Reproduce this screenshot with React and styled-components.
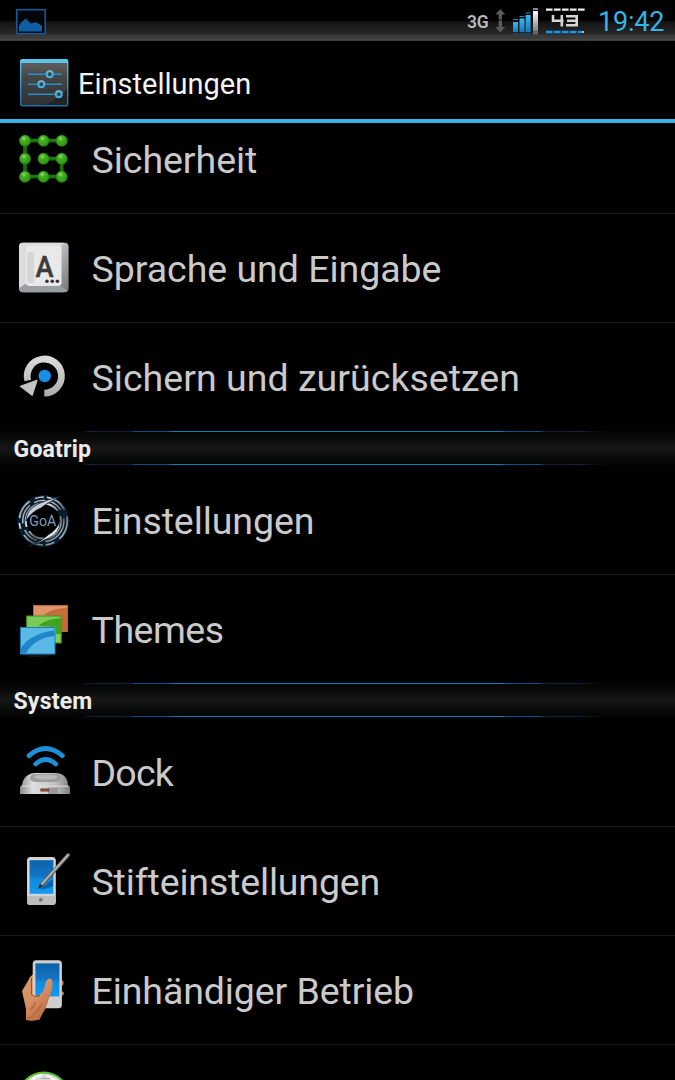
import React from 'react';
import styled, {createGlobalStyle} from 'styled-components';

const GlobalStyle = createGlobalStyle`
    body {
        margin: 0;
        background: #000;
        font-family: Roboto, 'Open Sans', sans-serif;
        overflow: hidden;
    }
`

const Screen = styled.div`
    width: 675px;
    height: 1080px;
    display: flex;
    flex-direction: column;
    overflow: hidden;
    background: #000;
`

const StatusBar = styled.div`
    box-sizing: border-box;
    flex: none;
    display: flex;
    align-items: center;
    height: 41px;
    padding: 1px 10px 0 15px;
    background: linear-gradient(#000 0 20px, #131313 22px, #1d1d1d 28px, #282828 34px, #383838 35px, #3e3e3e 39px, #555 40px, #222 41px);
`

const StatusIcon = styled.svg`
    flex: none;
    display: block;
    margin-left: ${({$gap}) => $gap || 0}px;
`

const Network = styled.span`
    margin-left: auto;
    width: 22px;
    padding-top: 2px;
    font-size: 17.5px;
    font-weight: 600;
    line-height: 39px;
    letter-spacing: -0.2px;
    color: #b9b9b9;
`

const Clock = styled.span`
    margin-left: 13px;
    width: 67px;
    padding-top: 2px;
    font-size: 27px;
    line-height: 39px;
    letter-spacing: -0.2px;
    color: #33b5e5;
    white-space: nowrap;
`

const ActionBar = styled.header`
    box-sizing: border-box;
    flex: none;
    display: flex;
    align-items: center;
    height: 82px;
    padding: 6px 0 0 20px;
    border-bottom: 4px solid #33b5e5;
`

const Title = styled.h1`
    margin: 1px 0 0 9px;
    font-size: 29px;
    font-weight: 400;
    line-height: 40px;
    letter-spacing: 0;
    color: #f3f3f3;
`

const List = styled.main`
    flex: 1;
    min-height: 0;
    overflow: hidden;
`

/* the list is scrolled a little, the first row is cut by the action bar */
const Scrolled = styled.div`
    margin-top: -18px;
`

const Row = styled.div`
    box-sizing: border-box;
    display: flex;
    align-items: center;
    height: ${({$last}) => $last ? 108 : 109}px;
    padding: 0 14px;
    border-bottom: ${({$last}) => $last ? 'none' : '1px solid #1b1b1b'};
`

const Icon = styled.svg`
    flex: none;
    display: block;
    width: 60px;
    height: 60px;
    overflow: visible;
`

const Label = styled.span`
    margin: 1px 0 0 17.5px;
    font-size: 37.5px;
    line-height: 48px;
    letter-spacing: ${({$spacing}) => $spacing}px;
    color: #cacaca;
    white-space: nowrap;
`

const Section = styled.h2`
    box-sizing: border-box;
    display: flex;
    flex-direction: column;
    margin: 0 0 1px;
    height: 34px;
    font-size: 23px;
    font-weight: 700;
    line-height: 32px;
    letter-spacing: 0.2px;
    color: #ececec;
    background: linear-gradient(#030505, #080a0a 20%, #171717 50%, #080a0a 80%, #030505);

    &::before,
    &::after {
        content: '';
        flex: none;
        height: 1px;
        background: linear-gradient(90deg, transparent 82px, #06243c 90px 132px, #07508a 134px 168px, #0a7cc2 172px 500px, #07508a 508px 540px, #06243c 543px 585px, #111 590px, transparent 605px);
    }
`

const SectionName = styled.span`
    flex: none;
    height: 30px;
    padding: 2px 13.5px 0;
`

const Defs = () => (
    <svg width="0" height="0" style={{position: 'absolute'}}>
        <defs>
            <radialGradient id="green" cx=".4" cy=".3" r=".7">
                <stop offset="0" stopColor="#93dc6c"/>
                <stop offset=".35" stopColor="#41b01e"/>
                <stop offset="1" stopColor="#2f9412"/>
            </radialGradient>
            <linearGradient id="key" x2="1" y2="1">
                <stop offset="0" stopColor="#f2f2f2"/>
                <stop offset=".5" stopColor="#b5b7b9"/>
                <stop offset="1" stopColor="#74797d"/>
            </linearGradient>
            <linearGradient id="silver" x2="0" y2="1">
                <stop offset="0" stopColor="#d9d9d9"/>
                <stop offset="1" stopColor="#b0b0b0"/>
            </linearGradient>
            <linearGradient id="dock" x2="1" y2="0">
                <stop offset="0" stopColor="#8d8d8d"/>
                <stop offset=".25" stopColor="#dedede"/>
                <stop offset=".7" stopColor="#c2c2c2"/>
                <stop offset="1" stopColor="#7e7e7e"/>
            </linearGradient>
            <linearGradient id="blue" x2="0" y2="1">
                <stop offset="0" stopColor="#0b62a8"/>
                <stop offset=".5" stopColor="#1277c4"/>
                <stop offset=".55" stopColor="#0d8be0"/>
                <stop offset="1" stopColor="#139af0"/>
            </linearGradient>
            <linearGradient id="panel" x2="0" y2="1">
                <stop offset="0" stopColor="#636363"/>
                <stop offset=".4" stopColor="#454545"/>
                <stop offset="1" stopColor="#303030"/>
            </linearGradient>
            <linearGradient id="frame" x2="0" y2="1">
                <stop offset="0" stopColor="#57c4ee"/>
                <stop offset="1" stopColor="#1c6fa6"/>
            </linearGradient>
            <linearGradient id="skin" x2=".6" y2="1">
                <stop offset="0" stopColor="#e09a6e"/>
                <stop offset=".5" stopColor="#d58f62"/>
                <stop offset="1" stopColor="#b9683c"/>
            </linearGradient>
            <linearGradient id="chrome" x2="1" y2="1">
                <stop offset="0" stopColor="#7a8289"/>
                <stop offset=".35" stopColor="#dfe3e6"/>
                <stop offset=".6" stopColor="#59626a"/>
                <stop offset="1" stopColor="#c4c9cd"/>
            </linearGradient>
            <linearGradient id="bars" x2="0" y2="1">
                <stop offset="0" stopColor="#36b8f0"/>
                <stop offset="1" stopColor="#1b76bb"/>
            </linearGradient>
            <linearGradient id="bar4" x2="0" y2="1">
                <stop offset="0" stopColor="#fff"/>
                <stop offset="1" stopColor="#7c7c7c"/>
            </linearGradient>
        </defs>
    </svg>
)

const dots = [[11, 12.7], [29.5, 12.7], [47.7, 12.7], [11, 30.7], [29.5, 30.7], [47.7, 30.7], [11, 48.7], [29.5, 48.7], [47.7, 48.7]];

const Pattern = () => (
    <Icon viewBox="0 1 60 60">
        <path d="M47.7 12.7H11V48.7H47.7V30.7H29.5" fill="none" stroke="#176b0a" strokeWidth="3.8"/>
        <path d="M47.7 12H11M29.5 30H47.7M11 48H47.7" fill="none" stroke="#278a16" strokeWidth="1.2"/>
        {dots.map(([x, y]) => <circle key={`${x}-${y}`} cx={x} cy={y} r="5.6" fill="url(#green)" stroke="#1f7a0d" strokeWidth=".6"/>)}
    </Icon>
)

const Key = () => (
    <Icon viewBox="0 1 60 60">
        <rect x="5" y="5.7" width="49.6" height="49.6" rx="4" fill="url(#key)"/>
        <path d="M5.3 50L12 46L47 49L53.6 54Q51 55.3 49 55.3H9Q5.3 55 5.3 50z" fill="#9b9ea0"/>
        <path d="M5 10Q5 5.7 9 5.7H50L47 9L13 46L5 51z" fill="#dcdcdc"/>
        <rect x="12" y="8.5" width="35.5" height="40.5" rx="3.5" fill="#e9e9e9"/>
        <path d="M13 17Q13 15 15 15H20V46H16Q13 46 13 43z" fill="#d6d6d6"/>
        <text x="21.4" y="40" fontFamily="Roboto" fontWeight="500" fontSize="29" textLength="18" lengthAdjust="spacingAndGlyphs" fill="#3c3c3c" stroke="#3c3c3c" strokeWidth=".5">A</text>
        <circle cx="33" cy="44.2" r="1.8" fill="#333"/>
        <circle cx="38.3" cy="44.2" r="1.8" fill="#333"/>
        <circle cx="43.4" cy="44.2" r="1.8" fill="#333"/>
    </Icon>
)

const Restore = () => (
    <Icon viewBox="0 1 60 60">
        <path d="M30.3 47.2A17.1 17.1 0 1 0 13.8 34.5" fill="none" stroke="url(#silver)" strokeWidth="6.8"/>
        <path d="M6.5 40.2L23 34.2L18.2 49.3z" fill="#c4c4c4" stroke="#c4c4c4" strokeWidth="1.2" strokeLinejoin="round"/>
        <circle cx="30.7" cy="30" r="6.2" fill="#1590e6"/>
    </Icon>
)

const Goa = () => (
    <Icon viewBox="0 0 60 60">
        <g fill="none">
            <circle cx="29.3" cy="31" r="21.5" stroke="#081c2e" strokeWidth="9"/>
            <circle cx="29.3" cy="31" r="24" stroke="url(#chrome)" strokeWidth="1.7" strokeDasharray="20 6 9 3 22 7 6 5"/>
            <circle cx="29.3" cy="31" r="20.6" stroke="url(#chrome)" strokeWidth="1.4" strokeDasharray="30 9 16 7 20 5"/>
            <circle cx="29.3" cy="31" r="17.6" stroke="url(#chrome)" strokeWidth="2" strokeDasharray="44 5 50 6"/>
        </g>
        <path d="M46.5 6.5Q33 13 27 18Q17 22 12 31Q12 20 24 14Q34 9 46.5 6.5z" fill="#c8cdd2" stroke="#0c1a26" strokeWidth=".8"/>
        <path d="M14 56.5Q28 51 34 45Q43 40 46 31Q46.5 43 34 48.5Q25 53 14 56.5z" fill="#e6e8ea" stroke="#0c1a26" strokeWidth=".8"/>
        <text x="15.3" y="36" fontFamily="Roboto" fontSize="14" textLength="27" lengthAdjust="spacingAndGlyphs" fill="#7f9cb6">GoA</text>
    </Icon>
)

const Themes = () => (
    <Icon viewBox="0 0 60 60">
        <ellipse cx="23" cy="56" rx="15" ry="2" fill="#131313"/>
        <rect x="19.5" y="6.5" width="34" height="26" fill="#e09468" stroke="#b5653a"/>
        <path d="M30 16Q38 9 53 9V32H47V18z" fill="#c56c3a"/>
        <rect x="12.7" y="17" width="34.5" height="27" fill="#7acb58" stroke="#3c9420"/>
        <path d="M24 27Q32 20 47 19V35H42V28z" fill="#3fa31f"/>
        <rect x="6.5" y="28.5" width="34.5" height="26.5" fill="#5bb9e6" stroke="#1c7cba"/>
        <path d="M7 54.5V49Q17 34 40.5 31.5V37Q20 39 12 54.5z" fill="#1f86ca"/>
    </Icon>
)

const Dock = () => (
    <Icon viewBox="0 0 60 60">
        <path d="M15 13.6Q31.7 -.6 48.3 13.6M21.7 22Q31.7 13 41.7 22" fill="none" stroke="#1f8fd6" strokeWidth="4.8" strokeLinecap="round"/>
        <path d="M6 52V46Q6 44 8 43Q9 36 14 33Q17 31 21 31H41Q46 31 49 33Q53.5 36 54 43Q56 44 56 46V52z" fill="url(#dock)"/>
        <path d="M16 36.5Q16 32 21 32H41Q47 32 47 36.5Q46 40 40 40H23Q17 40 16 36.5z" fill="#9c9c9c"/>
        <path d="M23 33H40Q44 33.5 43 36L36 37.5H26L21 36Q20 33.5 23 33z" fill="#b9b9b9"/>
        <path d="M8 44.2H54" stroke="#e0e0e0" strokeWidth="1"/>
        <rect x="34" y="45.5" width="10" height="6.5" fill="#9b9b9b"/>
        <rect x="26.3" y="46.6" width="8.8" height="3.2" rx="1" fill="#5c4c46"/>
        <path d="M27 49.2H34" stroke="#ed6b2d" strokeWidth="1.2"/>
    </Icon>
)

const Pen = () => (
    <Icon viewBox="0 0 60 60">
        <rect x="13" y="6" width="28.8" height="48" rx="3.5" fill="#d3d3d3"/>
        <path d="M13 45H41.8V50.5Q41.8 54 38.3 54H16.5Q13 54 13 50.5z" fill="#bdbdbd"/>
        <rect x="15.6" y="9.2" width="23.8" height="33.6" fill="url(#blue)"/>
        <path d="M26 38L39 28V35Q32 39 26 38z" fill="#0a63aa"/>
        <circle cx="26.8" cy="48.8" r="2" fill="#777"/>
        <path d="M27 34.5L54.3 4" stroke="#555" strokeWidth="4" strokeLinecap="round"/>
        <path d="M27 34L54 4" stroke="#b3afab" strokeWidth="2.2" strokeLinecap="round"/>
        <path d="M23.6 38L26.2 32.8L29.2 35.2z" fill="#303030"/>
    </Icon>
)

const Hand = () => (
    <Icon viewBox="0 0 60 60">
        <path d="M46 20.5H49Q50.5 23 49 25.5H46zM46 31.5H49Q51 33 49 35.6H46z" fill="#c37547"/>
        <path d="M19 14.5Q16 16 14.5 20L8 31L12 49V60Q19 61 25.5 59.5L28 54L34 44L31 30H20z" fill="url(#skin)"/>
        <rect x="18.7" y=".3" width="29.2" height="48" rx="3.5" fill="#cfcfcf"/>
        <rect x="21.4" y="3.4" width="24" height="33" fill="url(#blue)"/>
        <path d="M18 30Q16 35 13 42L12 49V60Q19 61 25.5 59.5Q28 54 31 49Q33 46 34.5 40Q39 29 38.5 21.5Q37 16.5 33.5 19.5Q31 22 30.5 28Q28 34 24.5 35.5Q21 36.5 19 35z" fill="url(#skin)"/>
        <path d="M17.5 18V34.5Q21 38 26 35.6" fill="none" stroke="#8c4c2a" strokeWidth=".9"/>
        <path d="M16 50Q20 47 21 42M19 55Q25 50 28 43M13 58L19 57" fill="none" stroke="#b06a42" strokeWidth="1.3"/>
    </Icon>
)

const Round = () => (
    <Icon viewBox="0 0 60 60">
        <circle cx="29.7" cy="28.2" r="24.8" fill="#d9dcd6" stroke="#58b92d" strokeWidth="2"/>
        <path d="M17 12Q21 7 28 6M33 6.5L42 12" fill="none" stroke="#f5f5f5" strokeWidth="2.5"/>
        <path d="M27 9.5H36" stroke="#a9aca6" strokeWidth="1"/>
    </Icon>
)

const sliders = [[29.7, 15.2], [21.3, 25.3], [38.8, 35.2]];

const SettingsIcon = () => (
    <svg width="49" height="48" viewBox="0 0 49 48">
        <rect x=".7" y=".7" width="47" height="46" rx="1.5" fill="url(#panel)" stroke="url(#frame)" strokeWidth="1.4"/>
        <path d="M47 30V46H24Q36 42 47 30z" fill="#242424"/>
        <rect x=".5" y=".5" width="47.6" height="3.6" rx="1.2" fill="#5cc5ea"/>
        {sliders.map(([x, y]) => (
            <g key={y} fill="none">
                <path d={`M8 ${y}H42`} stroke="#2190cf" strokeWidth="1.4"/>
                <circle cx={x} cy={y} r="3" fill="#444" stroke="#3fb3e8" strokeWidth="2"/>
                <path d={`M${x - 3.2} ${y - 1.5}A3.6 3.6 0 0 1 ${x + 3.2} ${y - 1.5}`} stroke="#a5b8c0" strokeWidth="1"/>
            </g>
        ))}
    </svg>
)

const bars = [[0, 14, 11], [6.5, 10.5, 8], [12.6, 7, 4.5]];

const Status = () => (
    <StatusBar>
        <StatusIcon width="31" height="27" viewBox="0 0 31 27">
            <rect x="1.7" y="1.7" width="28.6" height="24" fill="#020508" stroke="#0d5c9e" strokeWidth="1.6"/>
            <path d="M4 23.5V18L6 14.5L10.5 10.5L16 15.5L21 14L27 18V23.5z" fill="#0d5fa4"/>
        </StatusIcon>
        <Network>3G</Network>
        <StatusIcon $gap={6} width="11" height="24" viewBox="0 0 11 24">
            <path d="M5.3 0L10.3 5.5H7V10.4H3.6V5.5H.3zM5.3 23.5L.3 18H3.6V11.6H7V18H10.3z" fill="#5b5b5b"/>
        </StatusIcon>
        <StatusIcon $gap={7} width="26" height="27" viewBox="0 0 26 27">
            {bars.map(([x, y, cap]) => (
                <g key={x} fill="url(#bars)">
                    <rect x={x} y={y} width="5" height={24 - y}/>
                    <path d={`M${x} ${cap}h5v1h-5z`} fill="#218cc8"/>
                    <path d={`M${x} 25.3h5v1.4h-5z`} fill="#174f7e"/>
                </g>
            ))}
            <rect x="20" y="3" width="5" height="20.5" fill="url(#bar4)"/>
            <path d="M20 .3h5v1.4h-5z" fill="#c8c8c8"/>
            <path d="M20 23.5h5v3h-5z" fill="#666"/>
        </StatusIcon>
        <StatusIcon $gap={7} width="39" height="26" viewBox="0 0 39 26">
            <path d="M0 1.6H39" stroke="#eee" strokeWidth="2.4" strokeDasharray="6.6 1.4"/>
            <path d="M7 7V12.7H17.5M15.8 7V18.5M20 8.2H30.7V17.3H20M21 12.7H30" fill="none" stroke="#d6d6d6" strokeWidth="2.6"/>
            <path d="M0 24H35" stroke="#1a94e6" strokeWidth="2.4" strokeDasharray="6.6 1.4"/>
            <path d="M35.5 24H38" stroke="#bbb" strokeWidth="2"/>
        </StatusIcon>
        <Clock>19:42</Clock>
    </StatusBar>
)

const groups = [
    {
        items: [
            {label: 'Sicherheit', spacing: -0.04, Art: Pattern},
            {label: 'Sprache und Eingabe', spacing: -0.03, Art: Key},
            {label: 'Sichern und zurücksetzen', spacing: 0.03, Art: Restore},
        ],
    },
    {
        name: 'Goatrip',
        items: [
            {label: 'Einstellungen', spacing: -0.08, Art: Goa},
            {label: 'Themes', spacing: -0.5, Art: Themes},
        ],
    },
    {
        name: 'System',
        items: [
            {label: 'Dock', spacing: -0.8, Art: Dock},
            {label: 'Stifteinstellungen', spacing: -0.16, Art: Pen},
            {label: 'Einhändiger Betrieb', spacing: -0.1, Art: Hand},
            {label: '', spacing: 0, Art: Round},
        ],
    },
];

const App = () => (
    <Screen>
        <GlobalStyle/>
        <Defs/>
        <Status/>
        <ActionBar>
            <SettingsIcon/>
            <Title>Einstellungen</Title>
        </ActionBar>
        <List>
            <Scrolled>
                {groups.map(({name, items}, i) => (
                    <React.Fragment key={i}>
                        {name && <Section><SectionName>{name}</SectionName></Section>}
                        {items.map(({label, spacing, Art}, n) => (
                            <Row key={n} $last={n === items.length - 1}>
                                <Art/>
                                {label && <Label $spacing={spacing}>{label}</Label>}
                            </Row>
                        ))}
                    </React.Fragment>
                ))}
            </Scrolled>
        </List>
    </Screen>
)

export default App;
